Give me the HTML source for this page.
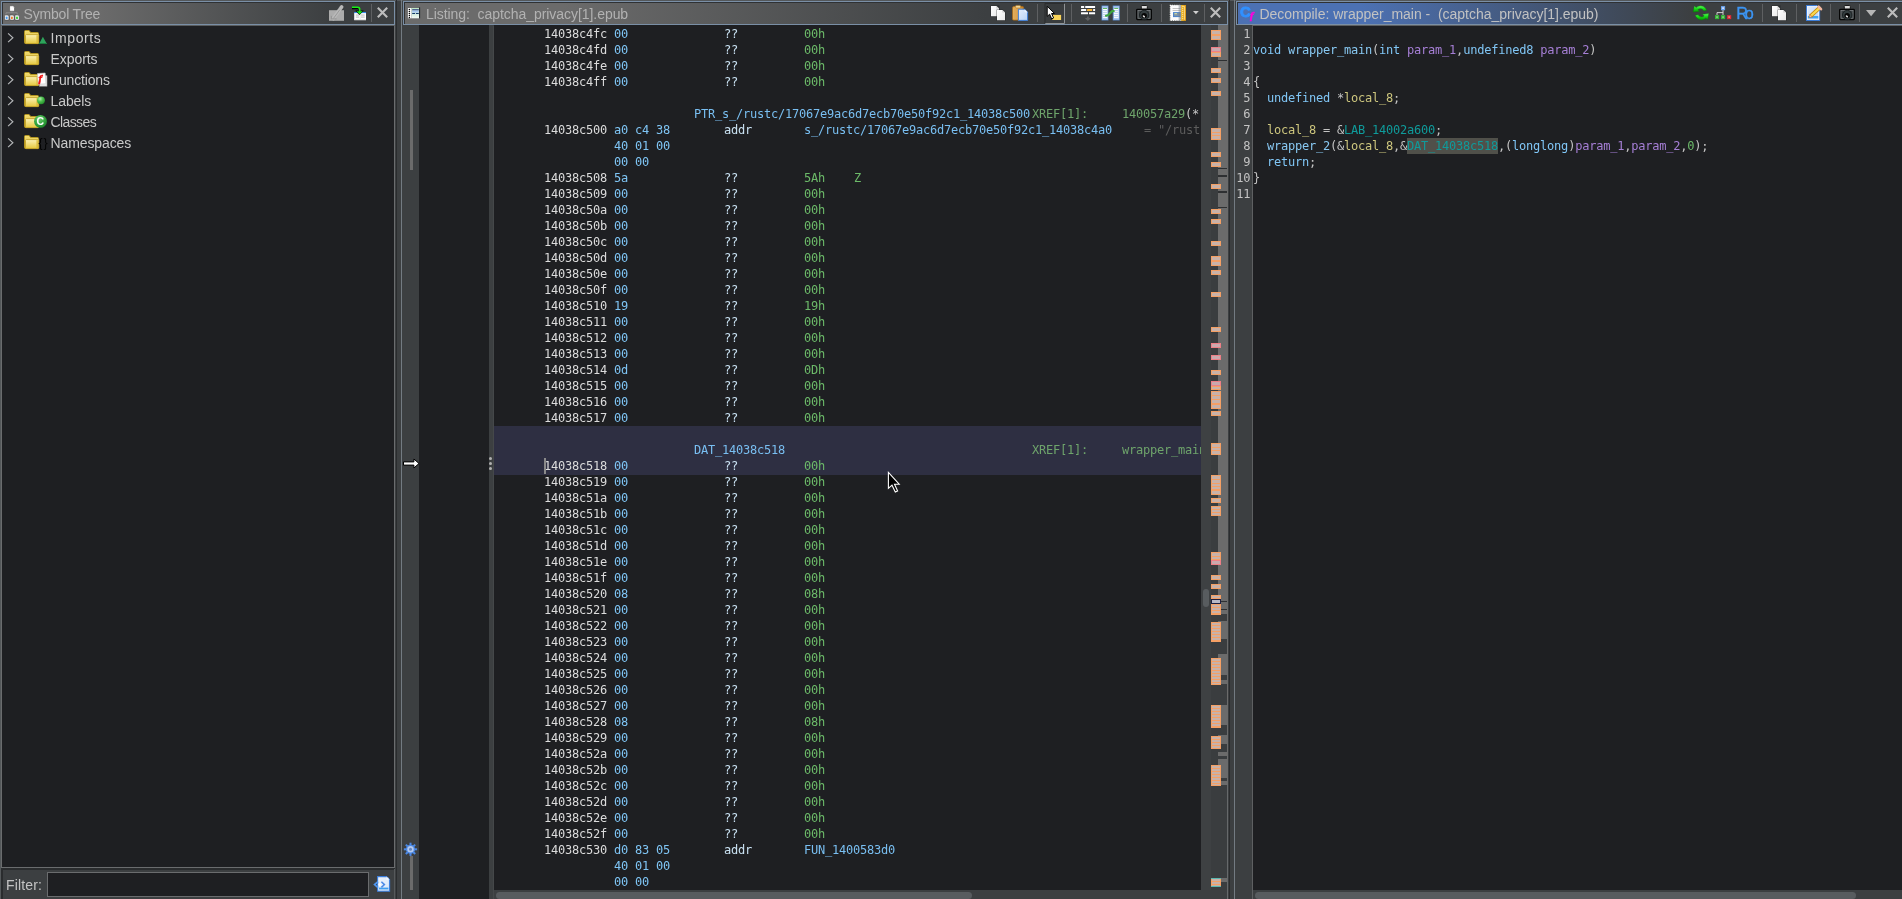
<!DOCTYPE html>
<html lang="en"><head><meta charset="utf-8"><title>Ghidra CodeBrowser</title>
<style>
*{box-sizing:border-box;margin:0;padding:0}
html,body{width:1902px;height:899px;overflow:hidden;background:#3c3f41}
body{position:relative;font-family:"Liberation Sans","DejaVu Sans",sans-serif;font-size:14px;color:#c8c8c8}
.a{position:absolute}
.hdr{position:absolute;top:1px;height:24px;border:1px solid #7a8fa6}
.hdr .in{position:absolute;left:0;top:0;right:0;bottom:0;border:1px solid #2f3133;border-right:0;border-bottom:0}
.ttl{position:absolute;top:2px;height:20px;line-height:20px;font-size:14px;color:#b2b2b2;white-space:pre}
.dark{background:#1e1f22}
.mono{font-family:"DejaVu Sans Mono","Liberation Mono",monospace;font-size:12px;letter-spacing:-0.2246px;white-space:pre;line-height:16px}
.row{position:absolute;left:0;height:16px;width:100%}
.row span{position:absolute;top:0}
.ad{color:#dcdcdc}.by{color:#7fc5f5}.mn{color:#c9e1f2}.op{color:#6cba69}.lb{color:#79bff2}
.xr{color:#6ea46b}.gy{color:#c8c8c8}.dm{color:#5c5c5c}
.trow{position:absolute;left:0;height:21px;width:392px}
.trow .tx{position:absolute;left:50.5px;top:2px;line-height:21px;font-size:14px;color:#c9c9c9;white-space:pre}
.sep{position:absolute;top:4px;width:1px;height:18px;background:#5e6062}
.mk{position:absolute;left:1211px;width:10px;background:#c9b2a9;border:1px solid #f5a065}
.mk.p{border-color:#ee7f86;background:#c9a9ae}
.kw{color:#80c6f6}.fn{color:#88c8f2}.pu{color:#c4c4c4}.pr{color:#a67fd6}.lv{color:#cdc67e}.gl{color:#0f9b9b}.nm{color:#6cba69}
.ln{position:absolute;left:1236.3px;width:14px;text-align:right;color:#c4c4c4}
.cl{position:absolute;left:1253px}
</style></head>
<body>
<div id="app" style="position:absolute;left:0;top:0;width:1902px;height:899px;will-change:transform">
<!-- frame chrome -->
<div class="a" style="left:0;top:0;width:1px;height:899px;background:#54585a"></div>
<div class="a" style="left:0;top:0;width:1902px;height:1px;background:#53575a"></div>
<div class="a" style="left:396px;top:0;width:1px;height:899px;background:#2a2c2e"></div>
<div class="a" style="left:401px;top:0;width:1px;height:899px;background:#737b82"></div>
<div class="a" style="left:1229px;top:0;width:1px;height:899px;background:#2a2c2e"></div>
<div class="a" style="left:1234px;top:0;width:1px;height:899px;background:#737b82"></div>
<!-- symbol tree -->
<div class="hdr" style="left:1px;width:394px"><div class="in" style="background:linear-gradient(90deg,#6b6b6b 0,#6b6b6b 95px,#3c3f41 328px)"></div><div class="ttl" style="left:21.5px;letter-spacing:-0.18px">Symbol Tree</div></div>
<div class="a dark" style="left:1px;top:25px;width:394px;height:843px;border:1px solid #6a6c6e;border-top-color:#5b5e60"></div>
<div class="trow" style="top:26px"><svg class="a" style="left:6px;top:5px" width="10" height="13" viewBox="0 0 10 13"><path d="M2.1 2.3 L6.9 6.75 L2.1 11.2" fill="none" stroke="#b4b6b8" stroke-width="1.15"/></svg><svg class="a" style="left:22px;top:0" width="28" height="21" viewBox="22 26 28 21"><path d="M24.5 31.5 q0 -1 1 -1 h3.6 l1.6 2 h6.8 q1 0 1 1 v9 q0 1 -1 1 h-12 q-1 0 -1 -1 z" fill="url(#gFoldB)" stroke="#b3951f" stroke-width="1"/><path d="M26.3 34.6 h11.6 q0.8 0 0.8 0.8 v7.4 q0 0.8 -0.8 0.8 h-11.6 q-0.8 0 -0.8 -0.8 v-7.4 q0 -0.8 0.8 -0.8 z" fill="url(#gFold)" stroke="#c3a32a" stroke-width="0.9"/><rect x="36.4" y="35.2" width="1.6" height="8" fill="#d6b530" opacity="0.75"/><path d="M42.9 36.7 L46.9 44 H39 Z" fill="#2ea45c"/><path d="M39.6 43 H46.5 L46.9 44 H39 Z" fill="#1c7a3f"/></svg><div class="tx" style="letter-spacing:0.6px">Imports</div></div>
<div class="trow" style="top:47px"><svg class="a" style="left:6px;top:5px" width="10" height="13" viewBox="0 0 10 13"><path d="M2.1 2.3 L6.9 6.75 L2.1 11.2" fill="none" stroke="#b4b6b8" stroke-width="1.15"/></svg><svg class="a" style="left:22px;top:0" width="28" height="21" viewBox="22 47 28 21"><path d="M24.5 52.5 q0 -1 1 -1 h3.6 l1.6 2 h6.8 q1 0 1 1 v9 q0 1 -1 1 h-12 q-1 0 -1 -1 z" fill="url(#gFoldB)" stroke="#b3951f" stroke-width="1"/><path d="M26.3 55.6 h11.6 q0.8 0 0.8 0.8 v7.4 q0 0.8 -0.8 0.8 h-11.6 q-0.8 0 -0.8 -0.8 v-7.4 q0 -0.8 0.8 -0.8 z" fill="url(#gFold)" stroke="#c3a32a" stroke-width="0.9"/><rect x="36.4" y="56.2" width="1.6" height="8" fill="#d6b530" opacity="0.75"/></svg><div class="tx" style="letter-spacing:-0.07px">Exports</div></div>
<div class="trow" style="top:68px"><svg class="a" style="left:6px;top:5px" width="10" height="13" viewBox="0 0 10 13"><path d="M2.1 2.3 L6.9 6.75 L2.1 11.2" fill="none" stroke="#b4b6b8" stroke-width="1.15"/></svg><svg class="a" style="left:22px;top:0" width="28" height="21" viewBox="22 68 28 21"><path d="M24.5 73.5 q0 -1 1 -1 h3.6 l1.6 2 h6.8 q1 0 1 1 v9 q0 1 -1 1 h-12 q-1 0 -1 -1 z" fill="url(#gFoldB)" stroke="#b3951f" stroke-width="1"/><path d="M26.3 76.6 h11.6 q0.8 0 0.8 0.8 v7.4 q0 0.8 -0.8 0.8 h-11.6 q-0.8 0 -0.8 -0.8 v-7.4 q0 -0.8 0.8 -0.8 z" fill="url(#gFold)" stroke="#c3a32a" stroke-width="0.9"/><rect x="36.4" y="77.2" width="1.6" height="8" fill="#d6b530" opacity="0.75"/><rect x="39.3" y="75.7" width="7.7" height="10.5" fill="#e9e9e9" stroke="#9a9a9a" stroke-width="0.6"/><rect x="37.8" y="73.3" width="7.7" height="10.8" fill="#ffffff" stroke="#c4c4c4" stroke-width="0.6" transform="rotate(-4 41 78)"/><text x="38.6" y="82.4" font-family="Liberation Serif, DejaVu Serif, serif" font-size="10.5" font-style="italic" font-weight="bold" fill="#f01010" stroke="#f01010" stroke-width="0.5">f</text></svg><div class="tx" style="letter-spacing:-0.15px">Functions</div></div>
<div class="trow" style="top:89px"><svg class="a" style="left:6px;top:5px" width="10" height="13" viewBox="0 0 10 13"><path d="M2.1 2.3 L6.9 6.75 L2.1 11.2" fill="none" stroke="#b4b6b8" stroke-width="1.15"/></svg><svg class="a" style="left:22px;top:0" width="28" height="21" viewBox="22 89 28 21"><path d="M24.5 94.5 q0 -1 1 -1 h3.6 l1.6 2 h6.8 q1 0 1 1 v9 q0 1 -1 1 h-12 q-1 0 -1 -1 z" fill="url(#gFoldB)" stroke="#b3951f" stroke-width="1"/><path d="M26.3 97.6 h11.6 q0.8 0 0.8 0.8 v7.4 q0 0.8 -0.8 0.8 h-11.6 q-0.8 0 -0.8 -0.8 v-7.4 q0 -0.8 0.8 -0.8 z" fill="url(#gFold)" stroke="#c3a32a" stroke-width="0.9"/><rect x="36.4" y="98.2" width="1.6" height="8" fill="#d6b530" opacity="0.75"/><circle cx="41" cy="100.3" r="3.9" fill="url(#gBall)"/></svg><div class="tx" style="letter-spacing:-0.08px">Labels</div></div>
<div class="trow" style="top:110px"><svg class="a" style="left:6px;top:5px" width="10" height="13" viewBox="0 0 10 13"><path d="M2.1 2.3 L6.9 6.75 L2.1 11.2" fill="none" stroke="#b4b6b8" stroke-width="1.15"/></svg><svg class="a" style="left:22px;top:0" width="28" height="21" viewBox="22 110 28 21"><path d="M24.5 115.5 q0 -1 1 -1 h3.6 l1.6 2 h6.8 q1 0 1 1 v9 q0 1 -1 1 h-12 q-1 0 -1 -1 z" fill="url(#gFoldB)" stroke="#b3951f" stroke-width="1"/><path d="M26.3 118.6 h11.6 q0.8 0 0.8 0.8 v7.4 q0 0.8 -0.8 0.8 h-11.6 q-0.8 0 -0.8 -0.8 v-7.4 q0 -0.8 0.8 -0.8 z" fill="url(#gFold)" stroke="#c3a32a" stroke-width="0.9"/><rect x="36.4" y="119.2" width="1.6" height="8" fill="#d6b530" opacity="0.75"/><circle cx="40.5" cy="121.4" r="6.4" fill="url(#gCls)"/><text x="40.4" y="125.2" text-anchor="middle" font-family="Liberation Sans, DejaVu Sans, sans-serif" font-size="10.5" font-weight="bold" fill="#ffffff">C</text></svg><div class="tx" style="letter-spacing:-0.6px">Classes</div></div>
<div class="trow" style="top:131px"><svg class="a" style="left:6px;top:5px" width="10" height="13" viewBox="0 0 10 13"><path d="M2.1 2.3 L6.9 6.75 L2.1 11.2" fill="none" stroke="#b4b6b8" stroke-width="1.15"/></svg><svg class="a" style="left:22px;top:0" width="28" height="21" viewBox="22 131 28 21"><path d="M24.5 136.5 q0 -1 1 -1 h3.6 l1.6 2 h6.8 q1 0 1 1 v9 q0 1 -1 1 h-12 q-1 0 -1 -1 z" fill="url(#gFoldB)" stroke="#b3951f" stroke-width="1"/><path d="M26.3 139.6 h11.6 q0.8 0 0.8 0.8 v7.4 q0 0.8 -0.8 0.8 h-11.6 q-0.8 0 -0.8 -0.8 v-7.4 q0 -0.8 0.8 -0.8 z" fill="url(#gFold)" stroke="#c3a32a" stroke-width="0.9"/><rect x="36.4" y="140.2" width="1.6" height="8" fill="#d6b530" opacity="0.75"/><text x="38.6" y="147.2" font-family="Liberation Sans, DejaVu Sans, sans-serif" font-size="12.5" fill="#030303" letter-spacing="0.7">{}</text></svg><div class="tx" style="letter-spacing:-0.1px">Namespaces</div></div>
<div class="a" style="left:1px;top:868px;width:394px;height:31px;background:#3c3f41;border-left:2px solid #2a2c2e;border-top:2px solid #2a2c2e"></div>
<div class="a" style="left:6px;top:875px;line-height:21px;font-size:14px;letter-spacing:0.15px;color:#c4c4c4">Filter:</div>
<div class="a dark" style="left:47px;top:872px;width:322px;height:25px;border:1px solid #6a6c6e"></div>
<div class="a" style="left:394px;top:869px;width:1px;height:30px;background:#56595b"></div>
<svg class="a" style="left:373px;top:875px" width="19" height="18" viewBox="373 875 19 18"><path d="M377.6 876.6 H386.4 L389.6 879.8 V891.2 H377.6 Z" fill="url(#gBlueP)" stroke="#3a7ddc" stroke-width="1.1"/><path d="M386.4 876.6 V879.8 H389.6 Z" fill="#f4f8ff"/><rect x="378.6" y="877.6" width="10" height="12.6" fill="#f3f7fe" opacity="0.55"/><rect x="379" y="887.6" width="9.4" height="1.8" fill="#3f9ff0"/><path d="M378 881.6 L374.6 884.6 L378 887.6" fill="none" stroke="#4f96ee" stroke-width="1.8"/><path d="M381.4 881.8 L384.4 884.6 L381.4 887.4" fill="none" stroke="#4c8ae6" stroke-width="1.5"/><path d="M379.7 882.8 L381.4 884.6 L379.7 886.4 L378 884.6 Z" fill="#ffffff" opacity="0.9"/></svg>
<!-- listing -->
<div class="hdr" style="left:403px;width:825px"><div class="in" style="background:linear-gradient(90deg,#6b6b6b 0,#6b6b6b 158px,#3c3f41 581px)"></div><div class="ttl" style="left:22px;letter-spacing:-0.055px">Listing:  captcha_privacy[1].epub</div></div>
<div class="a dark" style="left:419px;top:25px;width:70px;height:874px"></div>
<div class="a" style="left:410px;top:90px;width:3px;height:80px;background:#6b6b6b"></div>
<div class="a" style="left:410px;top:856px;width:3px;height:34px;background:#6b6b6b"></div>
<div class="a dark" style="left:494px;top:25px;width:707px;height:1px"></div>
<div class="a dark mono" style="left:494px;top:26px;width:707px;height:864px;overflow:hidden">
<div class="a" style="left:0;top:400px;width:707px;height:49px;background:#2e2f42"></div>
<div class="row" style="top:0px"><span class="ad" style="left:50px">14038c4fc</span><span class="by" style="left:120px">00</span><span class="mn" style="left:230px">??</span><span class="op" style="left:310px">00h</span></div>
<div class="row" style="top:16px"><span class="ad" style="left:50px">14038c4fd</span><span class="by" style="left:120px">00</span><span class="mn" style="left:230px">??</span><span class="op" style="left:310px">00h</span></div>
<div class="row" style="top:32px"><span class="ad" style="left:50px">14038c4fe</span><span class="by" style="left:120px">00</span><span class="mn" style="left:230px">??</span><span class="op" style="left:310px">00h</span></div>
<div class="row" style="top:48px"><span class="ad" style="left:50px">14038c4ff</span><span class="by" style="left:120px">00</span><span class="mn" style="left:230px">??</span><span class="op" style="left:310px">00h</span></div>
<div class="row" style="top:80px"><span class="lb" style="left:200px">PTR_s_/rustc/17067e9ac6d7ecb70e50f92c1_14038c500</span><span class="xr" style="left:538px">XREF[1]:</span><span class="xr" style="left:628px">140057a29</span><span class="gy" style="left:691px">(*</span></div>
<div class="row" style="top:96px"><span class="ad" style="left:50px">14038c500</span><span class="by" style="left:120px">a0 c4 38</span><span class="mn" style="left:230px">addr</span><span class="lb" style="left:310px">s_/rustc/17067e9ac6d7ecb70e50f92c1_14038c4a0</span><span class="dm" style="left:650px">= "/rust</span></div>
<div class="row" style="top:112px"><span class="by" style="left:120px">40 01 00</span></div>
<div class="row" style="top:128px"><span class="by" style="left:120px">00 00</span></div>
<div class="row" style="top:144px"><span class="ad" style="left:50px">14038c508</span><span class="by" style="left:120px">5a</span><span class="mn" style="left:230px">??</span><span class="op" style="left:310px">5Ah</span><span class="op" style="left:360px">Z</span></div>
<div class="row" style="top:160px"><span class="ad" style="left:50px">14038c509</span><span class="by" style="left:120px">00</span><span class="mn" style="left:230px">??</span><span class="op" style="left:310px">00h</span></div>
<div class="row" style="top:176px"><span class="ad" style="left:50px">14038c50a</span><span class="by" style="left:120px">00</span><span class="mn" style="left:230px">??</span><span class="op" style="left:310px">00h</span></div>
<div class="row" style="top:192px"><span class="ad" style="left:50px">14038c50b</span><span class="by" style="left:120px">00</span><span class="mn" style="left:230px">??</span><span class="op" style="left:310px">00h</span></div>
<div class="row" style="top:208px"><span class="ad" style="left:50px">14038c50c</span><span class="by" style="left:120px">00</span><span class="mn" style="left:230px">??</span><span class="op" style="left:310px">00h</span></div>
<div class="row" style="top:224px"><span class="ad" style="left:50px">14038c50d</span><span class="by" style="left:120px">00</span><span class="mn" style="left:230px">??</span><span class="op" style="left:310px">00h</span></div>
<div class="row" style="top:240px"><span class="ad" style="left:50px">14038c50e</span><span class="by" style="left:120px">00</span><span class="mn" style="left:230px">??</span><span class="op" style="left:310px">00h</span></div>
<div class="row" style="top:256px"><span class="ad" style="left:50px">14038c50f</span><span class="by" style="left:120px">00</span><span class="mn" style="left:230px">??</span><span class="op" style="left:310px">00h</span></div>
<div class="row" style="top:272px"><span class="ad" style="left:50px">14038c510</span><span class="by" style="left:120px">19</span><span class="mn" style="left:230px">??</span><span class="op" style="left:310px">19h</span></div>
<div class="row" style="top:288px"><span class="ad" style="left:50px">14038c511</span><span class="by" style="left:120px">00</span><span class="mn" style="left:230px">??</span><span class="op" style="left:310px">00h</span></div>
<div class="row" style="top:304px"><span class="ad" style="left:50px">14038c512</span><span class="by" style="left:120px">00</span><span class="mn" style="left:230px">??</span><span class="op" style="left:310px">00h</span></div>
<div class="row" style="top:320px"><span class="ad" style="left:50px">14038c513</span><span class="by" style="left:120px">00</span><span class="mn" style="left:230px">??</span><span class="op" style="left:310px">00h</span></div>
<div class="row" style="top:336px"><span class="ad" style="left:50px">14038c514</span><span class="by" style="left:120px">0d</span><span class="mn" style="left:230px">??</span><span class="op" style="left:310px">0Dh</span></div>
<div class="row" style="top:352px"><span class="ad" style="left:50px">14038c515</span><span class="by" style="left:120px">00</span><span class="mn" style="left:230px">??</span><span class="op" style="left:310px">00h</span></div>
<div class="row" style="top:368px"><span class="ad" style="left:50px">14038c516</span><span class="by" style="left:120px">00</span><span class="mn" style="left:230px">??</span><span class="op" style="left:310px">00h</span></div>
<div class="row" style="top:384px"><span class="ad" style="left:50px">14038c517</span><span class="by" style="left:120px">00</span><span class="mn" style="left:230px">??</span><span class="op" style="left:310px">00h</span></div>
<div class="row" style="top:416px"><span class="lb" style="left:200px">DAT_14038c518</span><span class="xr" style="left:538px">XREF[1]:</span><span class="xr" style="left:628px">wrapper_main</span></div>
<div class="row" style="top:432px"><span class="ad" style="left:50px">14038c518</span><span class="by" style="left:120px">00</span><span class="mn" style="left:230px">??</span><span class="op" style="left:310px">00h</span></div>
<div class="row" style="top:448px"><span class="ad" style="left:50px">14038c519</span><span class="by" style="left:120px">00</span><span class="mn" style="left:230px">??</span><span class="op" style="left:310px">00h</span></div>
<div class="row" style="top:464px"><span class="ad" style="left:50px">14038c51a</span><span class="by" style="left:120px">00</span><span class="mn" style="left:230px">??</span><span class="op" style="left:310px">00h</span></div>
<div class="row" style="top:480px"><span class="ad" style="left:50px">14038c51b</span><span class="by" style="left:120px">00</span><span class="mn" style="left:230px">??</span><span class="op" style="left:310px">00h</span></div>
<div class="row" style="top:496px"><span class="ad" style="left:50px">14038c51c</span><span class="by" style="left:120px">00</span><span class="mn" style="left:230px">??</span><span class="op" style="left:310px">00h</span></div>
<div class="row" style="top:512px"><span class="ad" style="left:50px">14038c51d</span><span class="by" style="left:120px">00</span><span class="mn" style="left:230px">??</span><span class="op" style="left:310px">00h</span></div>
<div class="row" style="top:528px"><span class="ad" style="left:50px">14038c51e</span><span class="by" style="left:120px">00</span><span class="mn" style="left:230px">??</span><span class="op" style="left:310px">00h</span></div>
<div class="row" style="top:544px"><span class="ad" style="left:50px">14038c51f</span><span class="by" style="left:120px">00</span><span class="mn" style="left:230px">??</span><span class="op" style="left:310px">00h</span></div>
<div class="row" style="top:560px"><span class="ad" style="left:50px">14038c520</span><span class="by" style="left:120px">08</span><span class="mn" style="left:230px">??</span><span class="op" style="left:310px">08h</span></div>
<div class="row" style="top:576px"><span class="ad" style="left:50px">14038c521</span><span class="by" style="left:120px">00</span><span class="mn" style="left:230px">??</span><span class="op" style="left:310px">00h</span></div>
<div class="row" style="top:592px"><span class="ad" style="left:50px">14038c522</span><span class="by" style="left:120px">00</span><span class="mn" style="left:230px">??</span><span class="op" style="left:310px">00h</span></div>
<div class="row" style="top:608px"><span class="ad" style="left:50px">14038c523</span><span class="by" style="left:120px">00</span><span class="mn" style="left:230px">??</span><span class="op" style="left:310px">00h</span></div>
<div class="row" style="top:624px"><span class="ad" style="left:50px">14038c524</span><span class="by" style="left:120px">00</span><span class="mn" style="left:230px">??</span><span class="op" style="left:310px">00h</span></div>
<div class="row" style="top:640px"><span class="ad" style="left:50px">14038c525</span><span class="by" style="left:120px">00</span><span class="mn" style="left:230px">??</span><span class="op" style="left:310px">00h</span></div>
<div class="row" style="top:656px"><span class="ad" style="left:50px">14038c526</span><span class="by" style="left:120px">00</span><span class="mn" style="left:230px">??</span><span class="op" style="left:310px">00h</span></div>
<div class="row" style="top:672px"><span class="ad" style="left:50px">14038c527</span><span class="by" style="left:120px">00</span><span class="mn" style="left:230px">??</span><span class="op" style="left:310px">00h</span></div>
<div class="row" style="top:688px"><span class="ad" style="left:50px">14038c528</span><span class="by" style="left:120px">08</span><span class="mn" style="left:230px">??</span><span class="op" style="left:310px">08h</span></div>
<div class="row" style="top:704px"><span class="ad" style="left:50px">14038c529</span><span class="by" style="left:120px">00</span><span class="mn" style="left:230px">??</span><span class="op" style="left:310px">00h</span></div>
<div class="row" style="top:720px"><span class="ad" style="left:50px">14038c52a</span><span class="by" style="left:120px">00</span><span class="mn" style="left:230px">??</span><span class="op" style="left:310px">00h</span></div>
<div class="row" style="top:736px"><span class="ad" style="left:50px">14038c52b</span><span class="by" style="left:120px">00</span><span class="mn" style="left:230px">??</span><span class="op" style="left:310px">00h</span></div>
<div class="row" style="top:752px"><span class="ad" style="left:50px">14038c52c</span><span class="by" style="left:120px">00</span><span class="mn" style="left:230px">??</span><span class="op" style="left:310px">00h</span></div>
<div class="row" style="top:768px"><span class="ad" style="left:50px">14038c52d</span><span class="by" style="left:120px">00</span><span class="mn" style="left:230px">??</span><span class="op" style="left:310px">00h</span></div>
<div class="row" style="top:784px"><span class="ad" style="left:50px">14038c52e</span><span class="by" style="left:120px">00</span><span class="mn" style="left:230px">??</span><span class="op" style="left:310px">00h</span></div>
<div class="row" style="top:800px"><span class="ad" style="left:50px">14038c52f</span><span class="by" style="left:120px">00</span><span class="mn" style="left:230px">??</span><span class="op" style="left:310px">00h</span></div>
<div class="row" style="top:816px"><span class="ad" style="left:50px">14038c530</span><span class="by" style="left:120px">d0 83 05</span><span class="mn" style="left:230px">addr</span><span class="lb" style="left:310px">FUN_1400583d0</span></div>
<div class="row" style="top:832px"><span class="by" style="left:120px">40 01 00</span></div>
<div class="row" style="top:848px"><span class="by" style="left:120px">00 00</span></div>
<div class="a" style="left:50px;top:432px;width:2px;height:16px;background:#8a8a8a"></div>
</div>
<div class="a" style="left:489px;top:26px;width:5px;height:873px;background:#3c3f41;border-right:1px solid #45484a"></div>
<div class="a" style="left:489px;top:457px;width:3px;height:3px;border-radius:50%;background:#b0b0b0"></div>
<div class="a" style="left:489px;top:462px;width:3px;height:3px;border-radius:50%;background:#b0b0b0"></div>
<div class="a" style="left:489px;top:467px;width:3px;height:3px;border-radius:50%;background:#b0b0b0"></div>
<div class="a" style="left:496px;top:892px;width:476px;height:7px;border-radius:3.5px;background:#585c5f"></div>
<div class="a" style="left:1201px;top:25px;width:10px;height:865px;background:#3e4143"></div>
<div class="a" style="left:1203px;top:589px;width:6px;height:18px;border-radius:3px;background:#585c5f"></div>
<div class="a" style="left:1211px;top:25px;width:16px;height:865px;background:#3a3d3f"></div>
<div class="a" style="left:1218px;top:25px;width:10px;height:760px;background:#6b6b6b"></div>
<div class="a" style="left:1227px;top:785px;width:1px;height:114px;background:#66696b"></div>
<div class="a" style="left:1218px;top:60px;width:9px;height:1px;background:#2e3032"></div>
<div class="a" style="left:1218px;top:168px;width:9px;height:1px;background:#2e3032"></div>
<div class="a" style="left:1218px;top:175px;width:9px;height:2px;background:#2e3032"></div>
<div class="a" style="left:1218px;top:191px;width:9px;height:2px;background:#2e3032"></div>
<div class="a" style="left:1218px;top:207px;width:9px;height:1px;background:#2e3032"></div>
<div class="a" style="left:1218px;top:601px;width:9px;height:1px;background:#2e3032"></div>
<div class="a" style="left:1218px;top:609px;width:9px;height:1px;background:#2e3032"></div>
<div class="a" style="left:1218px;top:614px;width:9px;height:7px;background:#3a3d3f"></div>
<div class="a" style="left:1218px;top:639px;width:9px;height:15px;background:#3a3d3f"></div>
<div class="a" style="left:1218px;top:675px;width:9px;height:5px;background:#3a3d3f"></div>
<div class="a" style="left:1218px;top:684px;width:9px;height:21px;background:#3a3d3f"></div>
<div class="a" style="left:1218px;top:725px;width:9px;height:10px;background:#3a3d3f"></div>
<div class="a" style="left:1218px;top:744px;width:9px;height:8px;background:#3a3d3f"></div>
<div class="a" style="left:1218px;top:756px;width:9px;height:3px;background:#3a3d3f"></div>
<div class="a" style="left:1218px;top:778px;width:9px;height:3px;background:#3a3d3f"></div>
<div class="a" style="left:1221px;top:781px;width:6px;height:4px;background:#6b6b6b"></div>
<div class="a" style="left:1221px;top:878px;width:6px;height:4px;background:#6b6b6b"></div>
<div class="mk" style="top:30px;height:5px"></div>
<div class="mk" style="top:35px;height:5px"></div>
<div class="mk p" style="top:47px;height:5px"></div>
<div class="mk" style="top:52px;height:5px"></div>
<div class="mk" style="top:68px;height:5px"></div>
<div class="mk" style="top:78px;height:5px"></div>
<div class="mk" style="top:91px;height:5px"></div>
<div class="mk" style="top:128px;height:5px"></div>
<div class="mk" style="top:132px;height:4px"></div>
<div class="mk" style="top:135px;height:5px"></div>
<div class="mk" style="top:152px;height:5px"></div>
<div class="mk" style="top:162px;height:5px"></div>
<div class="mk" style="top:184px;height:5px"></div>
<div class="mk" style="top:209px;height:5px"></div>
<div class="mk" style="top:219px;height:5px"></div>
<div class="mk" style="top:241px;height:5px"></div>
<div class="mk" style="top:256px;height:5px"></div>
<div class="mk" style="top:261px;height:5px"></div>
<div class="mk" style="top:270px;height:5px"></div>
<div class="mk" style="top:292px;height:5px"></div>
<div class="mk" style="top:327px;height:5px"></div>
<div class="mk p" style="top:343px;height:5px"></div>
<div class="mk p" style="top:355px;height:5px"></div>
<div class="mk" style="top:370px;height:5px"></div>
<div class="mk p" style="top:381px;height:5px"></div>
<div class="mk" style="top:386px;height:4px"></div>
<div class="mk" style="top:391px;height:5px"></div>
<div class="mk" style="top:395px;height:5px"></div>
<div class="mk" style="top:399px;height:5px"></div>
<div class="mk" style="top:404px;height:5px"></div>
<div class="mk" style="top:411px;height:5px"></div>
<div class="mk" style="top:443px;height:5px"></div>
<div class="mk" style="top:447px;height:4px"></div>
<div class="mk" style="top:450px;height:5px"></div>
<div class="mk" style="top:475px;height:5px"></div>
<div class="mk" style="top:479px;height:5px"></div>
<div class="mk" style="top:483px;height:4px"></div>
<div class="mk" style="top:486px;height:4px"></div>
<div class="mk" style="top:490px;height:5px"></div>
<div class="mk" style="top:498px;height:5px"></div>
<div class="mk" style="top:506px;height:4px"></div>
<div class="mk" style="top:509px;height:4px"></div>
<div class="mk" style="top:512px;height:4px"></div>
<div class="mk" style="top:552px;height:5px"></div>
<div class="mk" style="top:556px;height:4px"></div>
<div class="mk p" style="top:560px;height:5px"></div>
<div class="mk" style="top:575px;height:5px"></div>
<div class="mk" style="top:584px;height:5px"></div>
<div class="mk" style="top:595px;height:4px"></div>
<div class="mk" style="top:604px;height:11px;background:repeating-linear-gradient(180deg,#c9b2a9 0,#c9b2a9 2px,#f5a065 2px,#f5a065 3px)"></div>
<div class="mk" style="top:622px;height:20px;background:repeating-linear-gradient(180deg,#c9b2a9 0,#c9b2a9 2px,#f5a065 2px,#f5a065 3px)"></div>
<div class="mk" style="top:658px;height:27px;background:repeating-linear-gradient(180deg,#c9b2a9 0,#c9b2a9 2px,#f5a065 2px,#f5a065 3px)"></div>
<div class="mk" style="top:705px;height:23px;background:repeating-linear-gradient(180deg,#c9b2a9 0,#c9b2a9 2px,#f5a065 2px,#f5a065 3px)"></div>
<div class="mk" style="top:736px;height:13px;background:repeating-linear-gradient(180deg,#c9b2a9 0,#c9b2a9 2px,#f5a065 2px,#f5a065 3px)"></div>
<div class="mk" style="top:765px;height:21px;background:repeating-linear-gradient(180deg,#c9b2a9 0,#c9b2a9 2px,#f5a065 2px,#f5a065 3px)"></div>
<div class="mk" style="top:878px;height:9px;background:repeating-linear-gradient(180deg,#c9b2a9 0,#c9b2a9 2px,#f5a065 2px,#f5a065 3px)"></div>
<div class="a" style="left:1211px;top:878px;width:10px;height:1px;background:#58b8b0"></div><div class="a" style="left:1211px;top:886px;width:10px;height:1px;background:#58b8b0"></div>
<div class="a" style="left:1211px;top:599px;width:10px;height:5px;background:#b9b9c6;border:1px solid #1d2040"></div>

<!-- decompile -->
<div class="hdr" style="left:1236px;width:667px;border-right:0"><div class="in" style="background:linear-gradient(90deg,#4c71b3 0,#4c71b3 123px,#3c3f41 453px)"></div><div class="ttl" style="left:22.5px;letter-spacing:-0.02px;color:#c2c2c2">Decompile: wrapper_main -  (captcha_privacy[1].epub)</div></div>
<div class="a dark" style="left:1253px;top:26px;width:649px;height:864px"></div>
<div class="a" style="left:1252px;top:25px;width:1px;height:874px;background:#5e6062"></div>
<div class="a" style="left:1252px;top:25px;width:650px;height:1px;background:#5e6062"></div>
<div class="a" style="left:1407px;top:138px;width:91px;height:16px;background:#50504a"></div>
<div class="mono">
<div class="ln" style="top:26px">1</div>
<div class="ln" style="top:42px">2</div><div class="cl" style="top:42px"><span class="kw">void</span> <span class="fn">wrapper_main</span><span class="pu">(</span><span class="kw">int</span> <span class="pr">param_1</span><span class="pu">,</span><span class="kw">undefined8</span> <span class="pr">param_2</span><span class="pu">)</span></div>
<div class="ln" style="top:58px">3</div>
<div class="ln" style="top:74px">4</div><div class="cl" style="top:74px"><span class="pu">{</span></div>
<div class="ln" style="top:90px">5</div><div class="cl" style="top:90px">  <span class="kw">undefined</span> <span class="pu">*</span><span class="lv">local_8</span><span class="pu">;</span></div>
<div class="ln" style="top:106px">6</div>
<div class="ln" style="top:122px">7</div><div class="cl" style="top:122px">  <span class="lv">local_8</span> <span class="pu">= &amp;</span><span class="gl">LAB_14002a600</span><span class="pu">;</span></div>
<div class="ln" style="top:138px">8</div><div class="cl" style="top:138px">  <span class="fn">wrapper_2</span><span class="pu">(&amp;</span><span class="lv">local_8</span><span class="pu">,&amp;</span><span class="gl">DAT_14038c518</span><span class="pu">,(</span><span class="kw">longlong</span><span class="pu">)</span><span class="pr">param_1</span><span class="pu">,</span><span class="pr">param_2</span><span class="pu">,</span><span class="nm">0</span><span class="pu">);</span></div>
<div class="ln" style="top:154px">9</div><div class="cl" style="top:154px">  <span class="kw">return</span><span class="pu">;</span></div>
<div class="ln" style="top:170px">10</div><div class="cl" style="top:170px"><span class="pu">}</span></div>
<div class="ln" style="top:186px">11</div>
</div>
<div class="a" style="left:1255px;top:892px;width:601px;height:7px;border-radius:3.5px;background:#585c5f"></div>
<svg width="0" height="0" style="position:absolute"><defs><linearGradient id="gFold" x1="0" y1="0" x2="0" y2="1"><stop offset="0" stop-color="#fbf1b4"/><stop offset="1" stop-color="#e6c83e"/></linearGradient><linearGradient id="gFoldB" x1="0" y1="0" x2="0" y2="1"><stop offset="0" stop-color="#f3dd74"/><stop offset="1" stop-color="#d9b62a"/></linearGradient><radialGradient id="gBall" cx="0.38" cy="0.32" r="0.75"><stop offset="0" stop-color="#b9efb4"/><stop offset="0.45" stop-color="#4fbf4f"/><stop offset="1" stop-color="#1f8a28"/></radialGradient><radialGradient id="gCls" cx="0.4" cy="0.3" r="0.8"><stop offset="0" stop-color="#6fd06f"/><stop offset="0.6" stop-color="#2fa03a"/><stop offset="1" stop-color="#1c7a28"/></radialGradient><linearGradient id="gPaper" x1="0" y1="0" x2="1" y2="1"><stop offset="0" stop-color="#ffffff"/><stop offset="1" stop-color="#e9e9e9"/></linearGradient><linearGradient id="gBlueP" x1="0" y1="0" x2="1" y2="1"><stop offset="0" stop-color="#e4eefc"/><stop offset="1" stop-color="#b8d3f6"/></linearGradient><linearGradient id="gClip" x1="0" y1="0" x2="1" y2="0"><stop offset="0" stop-color="#e9b96a"/><stop offset="1" stop-color="#c67f1e"/></linearGradient><linearGradient id="gRuler" x1="0" y1="0" x2="1" y2="0"><stop offset="0" stop-color="#f6c338"/><stop offset="1" stop-color="#d98f0c"/></linearGradient><linearGradient id="gGreen" x1="0" y1="0" x2="0" y2="1"><stop offset="0" stop-color="#5dfc5d"/><stop offset="0.5" stop-color="#14d814"/><stop offset="1" stop-color="#079307"/></linearGradient><linearGradient id="gLst" x1="0" y1="0" x2="0" y2="1"><stop offset="0" stop-color="#bfe6c3"/><stop offset="0.55" stop-color="#cfeadb"/><stop offset="1" stop-color="#f4fbf6"/></linearGradient></defs></svg><svg class="a" style="left:3px;top:4px" width="18" height="18" viewBox="3 4 18 18"><path d="M6 15 V12.8 H17.2 V15 M11.9 11 V12.8" fill="none" stroke="#8f8f8f" stroke-width="0.9"/><path d="M9.6 5.8 H12.9 L14.5 7.4 V11.2 H9.6 Z" fill="#ffffff" stroke="#3a3a3a" stroke-width="0.5"/><path d="M12.9 5.8 V7.4 H14.5 Z" fill="#cfcfcf"/><path d="M4.7 15.1 H7.5 L8.9 16.5 V20 H4.7 Z" fill="#ffffff" stroke="#3a3a3a" stroke-width="0.5"/><path d="M7.5 15.1 V16.5 H8.9 Z" fill="#d4d4d4"/><rect x="5.8" y="16.6" width="1.8" height="2.4" rx="0.6" fill="#4a9cf2"/><path d="M9.9 15.1 H12.7 L14.1 16.5 V20 H9.9 Z" fill="#ffffff" stroke="#3a3a3a" stroke-width="0.5"/><path d="M12.7 15.1 V16.5 H14.1 Z" fill="#d4d4d4"/><rect x="11" y="16.6" width="1.8" height="2.4" rx="0.6" fill="#f07d2c"/><path d="M15 15.1 H17.8 L19.2 16.5 V20 H15 Z" fill="#ffffff" stroke="#3a3a3a" stroke-width="0.5"/><path d="M17.8 15.1 V16.5 H19.2 Z" fill="#d4d4d4"/><rect x="16.1" y="16.6" width="1.8" height="2.4" rx="0.6" fill="#2fd22f"/></svg><svg class="a" style="left:328px;top:4px" width="18" height="18" viewBox="328 4 18 18"><rect x="329" y="10.2" width="15" height="10.6" fill="#acacac"/><path d="M333.2 18.6 L342 6.4" stroke="#b9b9b9" stroke-width="3.6" stroke-linecap="round" stroke-dasharray="1.3 0.9"/><path d="M331.3 15.8 V18.9 H336.6" fill="none" stroke="#8e8e8e" stroke-width="0.9"/><path d="M333.4 18.5 L339.8 9.8" stroke="#949494" stroke-width="0.9"/></svg><svg class="a" style="left:351px;top:5px" width="17" height="17" viewBox="351 5 17 17"><rect x="354.2" y="12.9" width="11.8" height="7.2" fill="#ffffff"/><rect x="354.2" y="12" width="11.8" height="1.1" fill="#3a8ee8"/><rect x="355.8" y="14.6" width="3.4" height="0.9" fill="#b2b2b2"/><rect x="360.7" y="14.6" width="4" height="0.9" fill="#b2b2b2"/><rect x="355.8" y="16.6" width="3.4" height="0.9" fill="#b2b2b2"/><rect x="360.7" y="16.6" width="4" height="0.9" fill="#b2b2b2"/><rect x="354.2" y="19.3" width="11.8" height="0.9" fill="#d9d9d9"/><rect x="359.7" y="14" width="0.8" height="6" fill="#e4e4e4"/><path d="M352 8.6 H357.8 Q359.9 8.6 359.9 10.6" fill="none" stroke="#000" stroke-width="1.4"/><path d="M355.2 10.6 H363.8 L359.5 15 Z" fill="#000"/><path d="M352 7.3 H357.6 Q359.8 7.3 359.8 9.6 V11.6" fill="none" stroke="#16f016" stroke-width="1.5"/><path d="M356.6 11.3 H362.6 L359.6 14.3 Z" fill="#16f016"/></svg><div class="sep" style="left:371px"></div><svg class="a" style="left:376px;top:6px" width="13" height="13" viewBox="376 6 13 13"><path d="M377.8 7.8 l9.4 9.4 M387.2 7.8 l-9.4 9.4" stroke="#bdbdbd" stroke-width="2.1" fill="none"/></svg><svg class="a" style="left:406px;top:6px" width="16" height="14" viewBox="406 6 16 14"><rect x="407.9" y="8" width="3.7" height="10.3" fill="#ffffff"/><circle cx="409.4" cy="9.5" r="0.75" fill="#000"/><circle cx="409.4" cy="11.5" r="0.75" fill="#000"/><circle cx="409.4" cy="13.6" r="0.75" fill="#000"/><circle cx="409.4" cy="15.5" r="0.75" fill="#000"/><circle cx="409.4" cy="17.5" r="0.75" fill="#000"/><rect x="411.6" y="8" width="7.6" height="10.3" fill="url(#gLst)"/><rect x="412.2" y="9.3" width="6.6" height="1.1" fill="#1f2f78"/><rect x="412.2" y="10.6" width="6.6" height="1.9" fill="#a9c8f4"/><rect x="412.2" y="13.0" width="2.8" height="1" fill="#153a6a"/><rect x="415.9" y="13.0" width="2.9" height="1" fill="#153a6a"/><rect x="419.2" y="7.4" width="0.9" height="10.9" fill="#10151a"/></svg><svg class="a" style="left:990px;top:4px" width="17" height="18" viewBox="990 4 17 18"><rect x="990.5" y="5.4" width="9" height="11.4" fill="#1e1f21" opacity="0.55"/><path d="M991 5.9 H996.4 L999 8.5 V16.2 H991 Z" fill="url(#gPaper)" stroke="none" stroke-width="1"/><path d="M996.4 5.9 V8.5 H999 Z" fill="#cdcdcd"/><path d="M996.5 9.5 H1002.8 L1005.6 12.6 V20.8 H996.5 Z" fill="#1e1f21" opacity="0.6"/><path d="M997 10 H1002.4 L1005 12.6 V20.2 H997 Z" fill="url(#gPaper)" stroke="none" stroke-width="1"/><path d="M1002.4 10 V12.6 H1005 Z" fill="#cdcdcd"/></svg><svg class="a" style="left:1011px;top:4px" width="19" height="18" viewBox="1011 4 19 18"><rect x="1012.6" y="6.6" width="11" height="13.5" rx="1.2" fill="url(#gClip)" stroke="#b06d14" stroke-width="0.8"/><rect x="1014" y="8.2" width="8.2" height="10.6" fill="#e0a552" opacity="0.7"/><rect x="1015.6" y="5.4" width="5" height="2.6" rx="0.8" fill="#f3d79a" stroke="#b47a24" stroke-width="0.6"/><path d="M1018.4 9.2 H1024.6 L1027.6 12.2 V20.4 H1018.4 Z" fill="url(#gBlueP)" stroke="#3f7fd8" stroke-width="1"/><path d="M1024.6 9.2 V12.2 H1027.6 Z" fill="#eef5ff"/></svg><div class="sep" style="left:1037px"></div><svg class="a" style="left:1044px;top:2px" width="22" height="23" viewBox="1044 2 22 23"><rect x="1044.5" y="3" width="20.5" height="21" fill="#393c3e"/><path d="M1045 23.5 H1064.5 V3.5" fill="none" stroke="#8f9294" stroke-width="1"/><path d="M1045 23.5 V3.5 H1064.5" fill="none" stroke="#2b2d2f" stroke-width="1"/><rect x="1052.3" y="14.9" width="8.8" height="5.1" fill="#f9d45a"/><path d="M1047.2 6.3 V16.4 L1049.6 14.2 L1051.7 18.9 L1053.6 18 L1051.6 13.5 H1054.6 Z" fill="#ffffff" stroke="#000000" stroke-width="1" stroke-linejoin="round"/></svg><div class="sep" style="left:1071px"></div><svg class="a" style="left:1080px;top:5px" width="17" height="17" viewBox="1080 5 17 17"><rect x="1081" y="6" width="3.2" height="2" rx="0.3" fill="#fff"/><rect x="1085.2" y="6" width="9.9" height="2" rx="0.3" fill="#fff"/><rect x="1081" y="9.1" width="5.2" height="2" rx="0.3" fill="#fff"/><rect x="1087" y="9.1" width="5.2" height="2" rx="0.3" fill="#f6b43a"/><rect x="1093.1" y="9.1" width="2" height="2" rx="0.3" fill="#fff"/><rect x="1081" y="12.2" width="7" height="2" rx="0.3" fill="#fff"/><rect x="1089" y="12.2" width="6.1" height="2" rx="0.3" fill="#fff"/><path d="M1087 16.4 H1088.8 V18 H1091 L1087.9 21 L1084.8 18 H1087 Z" fill="#5d5f61"/></svg><svg class="a" style="left:1101px;top:5px" width="19" height="16" viewBox="1101 5 19 16"><rect x="1102" y="6" width="6" height="14" fill="#ffffff" stroke="#5b8fd6" stroke-width="0.9"/><rect x="1102.4" y="6.2" width="5.2" height="1.6" fill="#8fb6e8"/><rect x="1102.4" y="18.3" width="5.2" height="1.5" fill="#8fb6e8"/><rect x="1103" y="8" width="4" height="0.9" fill="#52b152"/><rect x="1103" y="10.3" width="4" height="0.8" fill="#a7c4ec"/><rect x="1103" y="12.3" width="4" height="0.8" fill="#a7c4ec"/><rect x="1103" y="14.3" width="4" height="0.8" fill="#a7c4ec"/><rect x="1103" y="16.3" width="4" height="0.8" fill="#a7c4ec"/><rect x="1113.2" y="6" width="6" height="14" fill="#ffffff" stroke="#5b8fd6" stroke-width="0.9"/><rect x="1113.6" y="6.2" width="5.2" height="1.6" fill="#8fb6e8"/><rect x="1113.6" y="18.3" width="5.2" height="1.5" fill="#8fb6e8"/><rect x="1114.2" y="8" width="4" height="0.9" fill="#52b152"/><rect x="1114.2" y="10.3" width="4" height="0.8" fill="#a7c4ec"/><rect x="1114.2" y="12.3" width="4" height="0.8" fill="#a7c4ec"/><rect x="1114.2" y="14.3" width="4" height="0.8" fill="#a7c4ec"/><rect x="1114.2" y="16.3" width="4" height="0.8" fill="#a7c4ec"/><path d="M1105.2 16 L1108 15.2 L1112 11.2 L1114.6 11" fill="none" stroke="#3ea63e" stroke-width="2.2" stroke-linejoin="round"/></svg><div class="sep" style="left:1127px"></div><svg class="a" style="left:1135px;top:4px" width="18" height="18" viewBox="1135 4 18 18"><rect x="1141.3" y="5.5" width="6" height="3.6" rx="0.8" fill="#dcdcdc" stroke="#0c0c0c" stroke-width="0.9"/><rect x="1136.7" y="9.3" width="14.6" height="10.2" rx="0.8" fill="#3b4143" stroke="#050505" stroke-width="1.3"/><rect x="1138" y="10.6" width="12" height="7.7" fill="none" stroke="#808486" stroke-width="0.7"/><circle cx="1144.2" cy="15" r="4.7" fill="#343d3f" stroke="#1a1f21" stroke-width="0.9"/><circle cx="1144.2" cy="15.6" r="2.7" fill="#050505"/><ellipse cx="1143.9" cy="16.4" rx="1.4" ry="0.8" transform="rotate(40 1143.9 16.4)" fill="#e8e8e8"/></svg><div class="sep" style="left:1161px"></div><svg class="a" style="left:1169px;top:4px" width="18" height="18" viewBox="1169 4 18 18"><rect x="1170.3" y="5.2" width="10.4" height="15.2" fill="#fcfcfc" stroke="#ffffff" stroke-width="1.1" stroke-dasharray="0.9 0.9"/><rect x="1172.6" y="8.1" width="7.6" height="0.9" fill="#bdbdbd"/><rect x="1172.6" y="10" width="7.6" height="0.9" fill="#bdbdbd"/><rect x="1173" y="12.1" width="7.6" height="5" fill="#4a84cf"/><rect x="1173.9" y="13" width="6.4" height="3.2" fill="#7d93a8"/><rect x="1174.5" y="13.2" width="2.4" height="1" fill="#dfe8a0"/><rect x="1178.6" y="5" width="2.6" height="15.8" fill="#6e7780" opacity="0.45"/><rect x="1181.1" y="5" width="4.9" height="15.9" fill="url(#gRuler)"/><path d="M1182 6.6 H1184.6 V19.8" fill="none" stroke="#fde79a" stroke-width="0.8"/><rect x="1182.2" y="8.2" width="1" height="0.8" fill="#fff3c4"/><rect x="1182.2" y="10.2" width="1" height="0.8" fill="#fff3c4"/><rect x="1182.2" y="12.2" width="1" height="0.8" fill="#fff3c4"/><rect x="1182.2" y="14.2" width="1" height="0.8" fill="#fff3c4"/><rect x="1182.2" y="16.2" width="1" height="0.8" fill="#fff3c4"/><rect x="1182.2" y="18.2" width="1" height="0.8" fill="#fff3c4"/></svg><svg class="a" style="left:1191.6px;top:10.2px" width="7.8" height="5.2" viewBox="1191.6 10.2 7.8 5.2"><path d="M1192.6 11.2 h5.8 l-2.9 3.2 z" fill="#d0d0d0"/></svg><div class="sep" style="left:1204px"></div><svg class="a" style="left:1209px;top:6px" width="13" height="13" viewBox="1209 6 13 13"><path d="M1210.8 7.8 l9.4 9.4 M1220.2 7.8 l-9.4 9.4" stroke="#bdbdbd" stroke-width="2.1" fill="none"/></svg><svg class="a" style="left:1238px;top:4px" width="20" height="19" viewBox="1238 4 20 19"><text x="1239.9" y="16.9" font-family="Liberation Sans, DejaVu Sans, sans-serif" font-size="14.8" font-weight="bold" fill="#3191ff" stroke="#3191ff" stroke-width="0.9" stroke-linejoin="round">C</text><text x="1249.9" y="18.6" font-family="Liberation Serif, DejaVu Serif, serif" font-size="10.5" font-style="italic" font-weight="bold" fill="#ff00dc" stroke="#ff00dc" stroke-width="0.55">f</text></svg><svg class="a" style="left:1692px;top:4px" width="18" height="18" viewBox="1692 4 18 18"><path d="M1706.6 10.3 A6.4 6.4 0 0 0 1696.2 7.5 L1694.3 5.9 L1693.2 12 L1699.5 11.4 L1697.9 9.7 A3.8 3.8 0 0 1 1703.8 10.9 Z" fill="url(#gGreen)" stroke="#0a7a0a" stroke-width="0.4"/><path d="M1695.3 15.3 A6.4 6.4 0 0 0 1705.8 18.2 L1707.7 19.8 L1708.8 13.6 L1702.5 14.3 L1704.1 15.9 A3.8 3.8 0 0 1 1698.1 14.8 Z" fill="url(#gGreen)" stroke="#0a7a0a" stroke-width="0.4"/></svg><svg class="a" style="left:1714px;top:5px" width="19" height="16" viewBox="1714 5 19 16"><path d="M1717 15.2 V12.6 H1723 M1723 10 V15.2" fill="none" stroke="#cfcfcf" stroke-width="1"/><rect x="1721" y="6.1" width="4.1" height="4.1" fill="#6ca6ee"/><rect x="1722.2" y="7.3" width="1.7" height="1.7" fill="#dfe4fb"/><rect x="1715" y="15.1" width="4.1" height="4" fill="#35b535"/><rect x="1716.25" y="16.3" width="1.6" height="1.6" fill="#8cd68c"/><rect x="1721" y="15.1" width="4.1" height="4" fill="#35b535"/><rect x="1722.25" y="16.3" width="1.6" height="1.6" fill="#8cd68c"/><rect x="1727.1" y="15.1" width="4.1" height="4" fill="#e02b36"/><rect x="1728.35" y="16.3" width="1.6" height="1.6" fill="#f08d93"/></svg><svg class="a" style="left:1735px;top:4px" width="20" height="19" viewBox="1735 4 20 19"><text x="1736.3" y="19" font-family="Liberation Sans, DejaVu Sans, sans-serif" font-size="16.2" fill="#3c95f4" stroke="#3c95f4" stroke-width="0.35" textLength="17.4" lengthAdjust="spacing">Ro</text></svg><div class="sep" style="left:1762px"></div><svg class="a" style="left:1771px;top:4px" width="17" height="18" viewBox="1771 4 17 18"><rect x="1771.5" y="5.4" width="9" height="11.4" fill="#1e1f21" opacity="0.55"/><path d="M1772 5.9 H1777.4 L1780 8.5 V16.2 H1772 Z" fill="url(#gPaper)" stroke="none" stroke-width="1"/><path d="M1777.4 5.9 V8.5 H1780 Z" fill="#cdcdcd"/><path d="M1777.5 9.5 H1783.8 L1786.6 12.6 V20.8 H1777.5 Z" fill="#1e1f21" opacity="0.6"/><path d="M1778 10 H1783.4 L1786 12.6 V20.2 H1778 Z" fill="url(#gPaper)" stroke="none" stroke-width="1"/><path d="M1783.4 10 V12.6 H1786 Z" fill="#cdcdcd"/></svg><div class="sep" style="left:1796px"></div><svg class="a" style="left:1805px;top:4px" width="18" height="18" viewBox="1805 4 18 18"><path d="M1806.6 5.6 H1816.6 L1819.6 8.6 V20.4 H1806.6 Z" fill="url(#gBlueP)" stroke="#3b7bd6" stroke-width="1.1"/><path d="M1816.6 5.6 V8.6 H1819.6 Z" fill="#f2f7ff"/><rect x="1807.4" y="6.4" width="11.4" height="13.2" fill="none" stroke="#ffffff" stroke-width="0.8" opacity="0.85"/><rect x="1807.9" y="16" width="10.4" height="2.4" fill="#3fa4f2"/><path d="M1810.8 15.9 L1819.5 7.9" stroke="#c8860f" stroke-width="4" stroke-linecap="butt"/><path d="M1811 15.7 L1819.3 8.1" stroke="#f9da52" stroke-width="2.2"/><path d="M1818.6 6.7 L1821 9.2" stroke="#f2b8a0" stroke-width="2.6" stroke-linecap="round"/><path d="M1809 17.6 L1809.6 14.4 L1812.4 17 Z" fill="#f3c79b" stroke="#b5651d" stroke-width="0.5"/></svg><div class="sep" style="left:1830px"></div><svg class="a" style="left:1838px;top:4px" width="18" height="18" viewBox="1838 4 18 18"><rect x="1844.3" y="5.5" width="6" height="3.6" rx="0.8" fill="#dcdcdc" stroke="#0c0c0c" stroke-width="0.9"/><rect x="1839.7" y="9.3" width="14.6" height="10.2" rx="0.8" fill="#3b4143" stroke="#050505" stroke-width="1.3"/><rect x="1841" y="10.6" width="12" height="7.7" fill="none" stroke="#808486" stroke-width="0.7"/><circle cx="1847.2" cy="15" r="4.7" fill="#343d3f" stroke="#1a1f21" stroke-width="0.9"/><circle cx="1847.2" cy="15.6" r="2.7" fill="#050505"/><ellipse cx="1846.9" cy="16.4" rx="1.4" ry="0.8" transform="rotate(40 1846.9 16.4)" fill="#e8e8e8"/></svg><div class="sep" style="left:1859px"></div><svg class="a" style="left:1865px;top:9px" width="12.2" height="8.2" viewBox="1865 9 12.2 8.2"><path d="M1866 10 h10.2 l-5.1 6.2 z" fill="#b6b6b6"/></svg><svg class="a" style="left:1886px;top:6px" width="13" height="13" viewBox="1886 6 13 13"><path d="M1887.8 7.8 l9.4 9.4 M1897.2 7.8 l-9.4 9.4" stroke="#bdbdbd" stroke-width="2.1" fill="none"/></svg><svg class="a" style="left:403px;top:842px" width="15" height="15" viewBox="403 842 15 15"><rect x="409.5" y="842.7" width="2" height="3.2" fill="#4a88e6" transform="rotate(0 410.5 849.3)"/><rect x="409.5" y="842.7" width="2" height="3.2" fill="#4a88e6" transform="rotate(45 410.5 849.3)"/><rect x="409.5" y="842.7" width="2" height="3.2" fill="#4a88e6" transform="rotate(90 410.5 849.3)"/><rect x="409.5" y="842.7" width="2" height="3.2" fill="#4a88e6" transform="rotate(135 410.5 849.3)"/><rect x="409.5" y="842.7" width="2" height="3.2" fill="#4a88e6" transform="rotate(180 410.5 849.3)"/><rect x="409.5" y="842.7" width="2" height="3.2" fill="#4a88e6" transform="rotate(225 410.5 849.3)"/><rect x="409.5" y="842.7" width="2" height="3.2" fill="#4a88e6" transform="rotate(270 410.5 849.3)"/><rect x="409.5" y="842.7" width="2" height="3.2" fill="#4a88e6" transform="rotate(315 410.5 849.3)"/><circle cx="410.5" cy="849.3" r="3.9" fill="#b4c9ee" stroke="#4a88e6" stroke-width="1.3"/><circle cx="410.5" cy="849.3" r="1.5" fill="#6585bd"/></svg><svg class="a" style="left:402px;top:457px" width="19" height="13" viewBox="402 457 19 13"><path d="M403.5 461.9 H413.9 V459 L419 463.5 L413.9 468 V465.1 H403.5 Z" fill="#ffffff" stroke="#000000" stroke-width="1" stroke-linejoin="miter"/></svg>
<svg class="a" style="left:886px;top:470px" width="16" height="24" viewBox="886 470 16 24"><path d="M888.4 472.4 V488.4 L892 485.2 L895.3 492 L897.6 490.9 L894.5 484.2 H899.2 Z" fill="#000000" stroke="#ffffff" stroke-width="1.1" stroke-linejoin="miter"/></svg>
</div>
</body></html>
